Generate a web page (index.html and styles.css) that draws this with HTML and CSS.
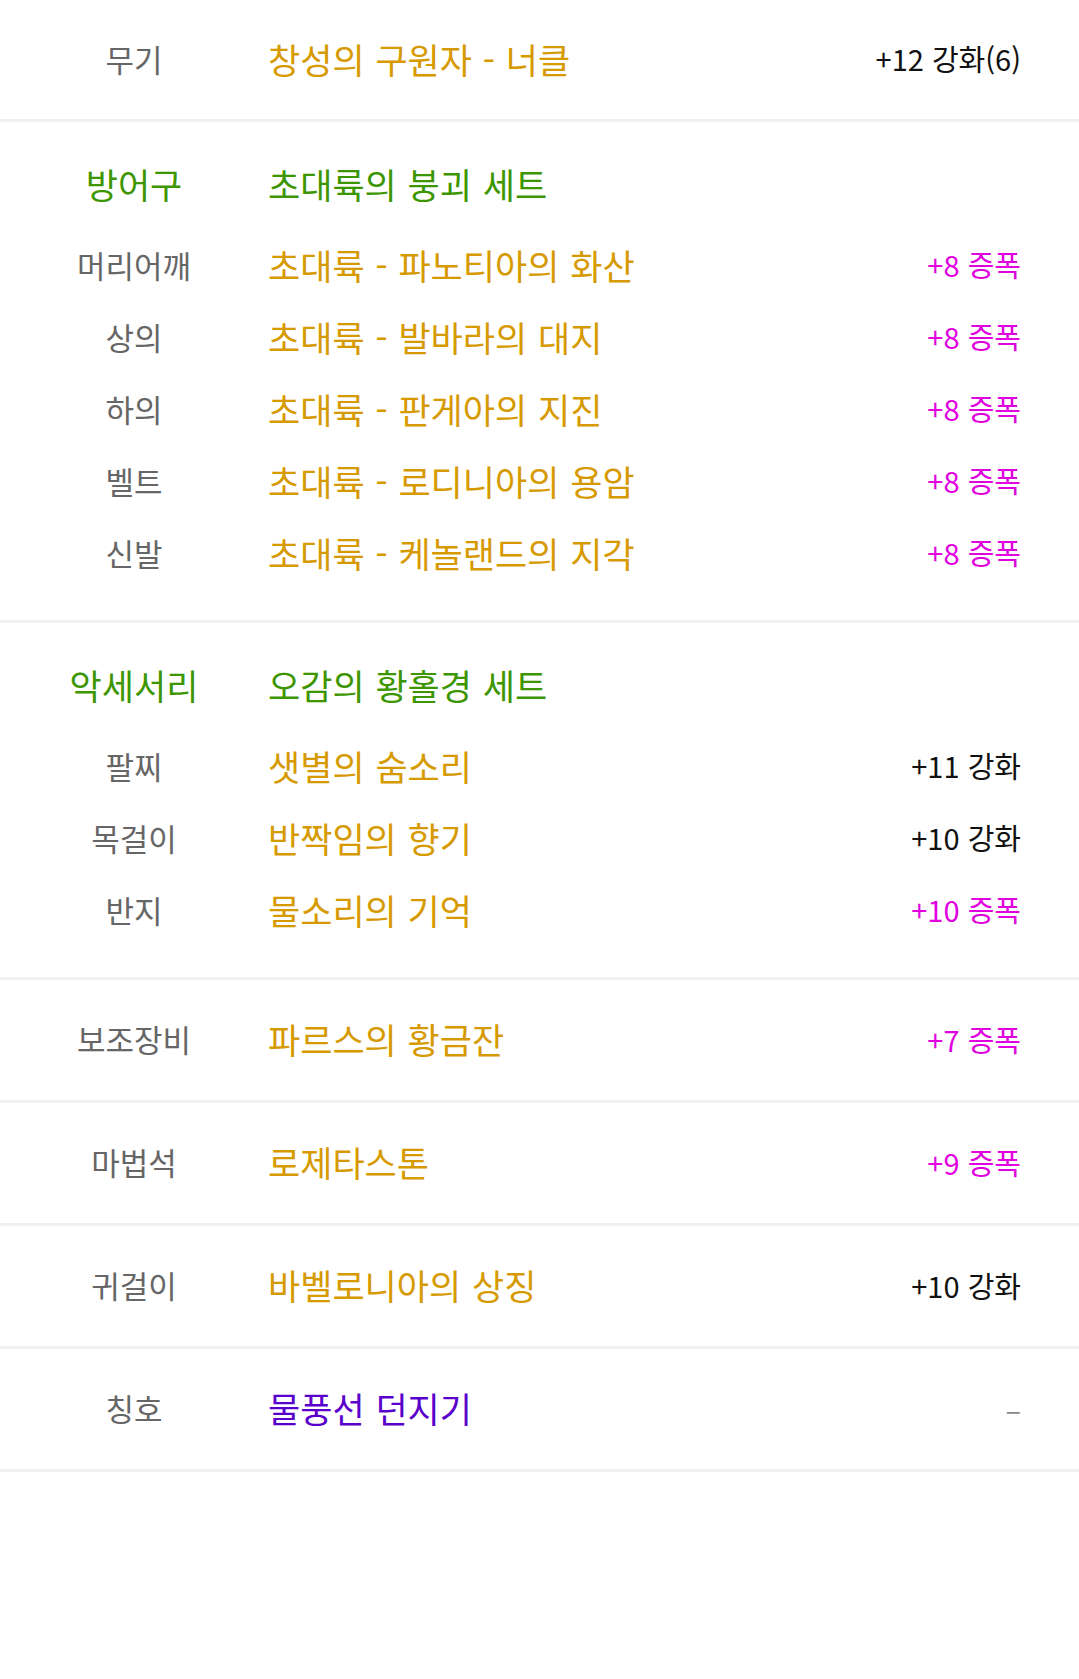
FILE: index.html
```html
<!DOCTYPE html>
<html lang="ko">
<head>
    <meta charset="UTF-8">
    <meta name="viewport" content="width=device-width, initial-scale=1.0">
    <title>장비</title>
    <link rel="stylesheet" href="styles.css">
</head>
<body>

<div id="equip">
    <div class="section single first">
        <div class="row">
            <span class="slot">무기</span>
            <span class="name">창성의 구원자 - 너클</span>
            <span class="value">+12 강화(6)</span>
        </div>
    </div>

    <div class="section group">
        <div class="row head">
            <span class="slot">방어구</span>
            <span class="name">초대륙의 붕괴 세트</span>
            <span class="value"></span>
        </div>
        <div class="row">
            <span class="slot">머리어깨</span>
            <span class="name">초대륙 - 파노티아의 화산</span>
            <span class="value amp">+8 증폭</span>
        </div>
        <div class="row">
            <span class="slot">상의</span>
            <span class="name">초대륙 - 발바라의 대지</span>
            <span class="value amp">+8 증폭</span>
        </div>
        <div class="row">
            <span class="slot">하의</span>
            <span class="name">초대륙 - 판게아의 지진</span>
            <span class="value amp">+8 증폭</span>
        </div>
        <div class="row">
            <span class="slot">벨트</span>
            <span class="name">초대륙 - 로디니아의 용암</span>
            <span class="value amp">+8 증폭</span>
        </div>
        <div class="row">
            <span class="slot">신발</span>
            <span class="name">초대륙 - 케놀랜드의 지각</span>
            <span class="value amp">+8 증폭</span>
        </div>
    </div>

    <div class="section group">
        <div class="row head">
            <span class="slot">악세서리</span>
            <span class="name">오감의 황홀경 세트</span>
            <span class="value"></span>
        </div>
        <div class="row">
            <span class="slot">팔찌</span>
            <span class="name">샛별의 숨소리</span>
            <span class="value">+11 강화</span>
        </div>
        <div class="row">
            <span class="slot">목걸이</span>
            <span class="name">반짝임의 향기</span>
            <span class="value">+10 강화</span>
        </div>
        <div class="row">
            <span class="slot">반지</span>
            <span class="name">물소리의 기억</span>
            <span class="value amp">+10 증폭</span>
        </div>
    </div>

    <div class="section single">
        <div class="row">
            <span class="slot">보조장비</span>
            <span class="name">파르스의 황금잔</span>
            <span class="value amp">+7 증폭</span>
        </div>
    </div>

    <div class="section single">
        <div class="row">
            <span class="slot">마법석</span>
            <span class="name">로제타스톤</span>
            <span class="value amp">+9 증폭</span>
        </div>
    </div>

    <div class="section single">
        <div class="row">
            <span class="slot">귀걸이</span>
            <span class="name">바벨로니아의 상징</span>
            <span class="value">+10 강화</span>
        </div>
    </div>

    <div class="section single">
        <div class="row">
            <span class="slot">칭호</span>
            <span class="name title">물풍선 던지기</span>
            <span class="value none">–</span>
        </div>
    </div>
</div>

</body>
</html>
```

FILE: styles.css
```css
body {
    font-family: "Noto Sans CJK KR", "Noto Sans", sans-serif;
    background: #fff;
    color: #111;
    margin: 0;
}
#equip {
    width: 100%;
}
.section {
    border-bottom: 3px solid #f1f1f1;
}
.single {
    height: 120px;
    display: flex;
    align-items: center;
}
.single.first {
    height: 119px;
}
.group {
    padding: 25px 0 32px;
}
.row {
    width: 100%;
    height: 72px;
    display: grid;
    grid-template-columns: 268px 1fr auto;
    align-items: center;
    padding-right: 58px;
    box-sizing: border-box;
}
.single .row {
    margin-top: -3px;
}
.row.head {
    margin-bottom: 9px;
}
.slot {
    text-align: center;
    font-size: 31px;
    color: #666;
}
.name {
    font-size: 35px;
    word-spacing: 1px;
    color: #d69a00;
    white-space: nowrap;
}
.value {
    font-size: 29px;
    color: #111;
    text-align: right;
}
.head .slot {
    font-size: 35px;
    color: #3d9600;
}
.head .name {
    color: #3d9600;
}
.amp {
    color: #e000e0;
}
.title {
    color: #5a00cc;
}
.none {
    color: #888;
}
```
